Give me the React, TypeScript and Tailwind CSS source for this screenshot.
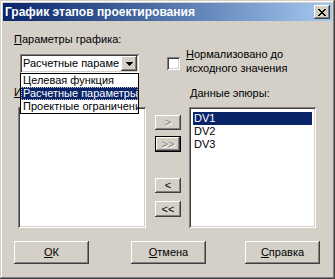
import React from "react";

const raised =
  "bg-[#d4d0c8] shadow-[inset_-1px_-1px_#404040,inset_1px_1px_#ffffff,inset_-2px_-2px_#808080,inset_2px_2px_#d4d0c8]";
const sunken =
  "bg-white shadow-[inset_1px_1px_#808080,inset_-1px_-1px_#ffffff,inset_2px_2px_#404040,inset_-2px_-2px_#d4d0c8]";

function Btn({ children, cls, disabled }: { children: React.ReactNode; cls: string; disabled?: boolean }) {
  return (
    <div
      className={`${raised} ${cls} flex items-center justify-center ${
        disabled ? "text-[#808080] [text-shadow:1px_1px_#ffffff]" : "text-black"
      }`}
    >
      {children}
    </div>
  );
}

export default function App() {
  return (
    <div className="w-[335px] h-[279px] bg-[#d4d0c8] p-[3px] flex flex-col font-['Liberation_Sans',Arial,sans-serif] text-[11px] leading-[13px] text-black shadow-[inset_-1px_-1px_#404040,inset_1px_1px_#d4d0c8,inset_-2px_-2px_#808080,inset_2px_2px_#ffffff] overflow-hidden">
      {/* Title bar */}
      <div className="h-[18px] flex items-center justify-between bg-gradient-to-r from-[#0a246a] to-[#a6caf0] pl-[2px] pr-[2px]">
        <span className="text-white font-bold text-[12px] leading-[14px]">График этапов проектирования</span>
        <div className={`${raised} w-[16px] h-[14px] flex items-center justify-center`}>
          <svg width="8" height="7" viewBox="0 0 8 7" shapeRendering="crispEdges">
            <path d="M0 0h2v1H0zM6 0h2v1H6zM1 1h2v1H1zM5 1h2v1H5zM2 2h4v1H2zM3 3h2v1H3zM2 4h4v1H2zM1 5h2v1H1zM5 5h2v1H5zM0 6h2v1H0zM6 6h2v1H6z" fill="#000" />
          </svg>
        </div>
      </div>

      {/* Body */}
      <div className="flex flex-col">
        <div className="flex">
          {/* Left column */}
          <div className="ml-[11px] w-[132px] flex flex-col">
            <div className="mt-[12px] h-[13px] whitespace-nowrap">
              <u>П</u>араметры графика:
            </div>
            <div className={`${sunken} relative mt-[8px] ml-[6px] w-[119px] h-[19px] flex items-center`}>
              <span className="pl-[3px] w-[99px] overflow-hidden whitespace-nowrap">Расчетные параметры</span>
              <div className={`${raised} absolute right-[2px] top-[2px] w-[16px] h-[15px] flex items-center justify-center`}>
                <svg width="7" height="4" viewBox="0 0 7 4" shapeRendering="crispEdges">
                  <path d="M0 0h7v1H0zM1 1h5v1H1zM2 2h3v1H2zM3 3h1v1H3z" fill="#000" />
                </svg>
              </div>
              {/* Dropdown list */}
              <div className="absolute left-0 top-[19px] w-[119px] border border-black bg-white z-10 flex flex-col">
                <div className="h-[13px] pl-[2px] whitespace-nowrap overflow-hidden">Целевая функция</div>
                <div className="h-[13px] pl-[2px] whitespace-nowrap overflow-hidden bg-[#0a246a] text-white outline outline-1 outline-dotted outline-[#c0c0c0] -outline-offset-1">
                  Расчетные параметры
                </div>
                <div className="h-[13px] pl-[2px] whitespace-nowrap overflow-hidden">Проектные ограничения</div>
              </div>
            </div>
            <div className="mt-[13px] h-[13px] whitespace-nowrap">
              <u>И</u>меющиеся данные:
            </div>
            <div className={`${sunken} mt-[8px] ml-[4px] w-[128px] h-[121px]`} />
          </div>

          {/* Right area */}
          <div className="ml-[9px] flex flex-col">
            <div className="mt-[26px] ml-[12px] flex items-start">
              <div className={`${sunken} mt-[10px] w-[13px] h-[13px] shrink-0`} />
              <div className="ml-[6px] leading-[14px]">
                <div>
                  <u>Н</u>ормализовано до
                </div>
                <div>исходного значения</div>
              </div>
            </div>
            <div className="mt-[12px] flex">
              <div className="w-[26px] flex flex-col pt-[28px]">
                <Btn cls="h-[15px]" disabled>
                  &gt;
                </Btn>
                <div className="mt-[6px] h-[16px] border border-black">
                  <Btn cls="h-[14px]" disabled>
                    &gt;&gt;
                  </Btn>
                </div>
                <Btn cls="mt-[26px] h-[15px]">&lt;</Btn>
                <Btn cls="mt-[8px] h-[16px]">&lt;&lt;</Btn>
              </div>
              <div className="ml-[8px] flex flex-col">
                <div className="ml-[1px] h-[13px] whitespace-nowrap">
                  <u>Д</u>анные эпюры:
                </div>
                <div className={`${sunken} mt-[7px] w-[127px] h-[121px] p-[4px] pt-[5px]`}>
                  <div className="h-[13px] pl-[1px] bg-[#0a246a] text-white">DV1</div>
                  <div className="h-[13px] pl-[1px]">DV2</div>
                  <div className="h-[13px] pl-[1px]">DV3</div>
                </div>
              </div>
            </div>
          </div>
        </div>

        {/* Bottom buttons */}
        <div className="mt-[13px] flex">
          <Btn cls="ml-[11px] w-[75px] h-[23px]">
            <u>О</u>К
          </Btn>
          <Btn cls="ml-[42px] w-[75px] h-[23px]">
            <u>О</u>тмена
          </Btn>
          <Btn cls="ml-[39px] w-[75px] h-[23px]">
            <u>С</u>правка
          </Btn>
        </div>
      </div>
    </div>
  );
}
